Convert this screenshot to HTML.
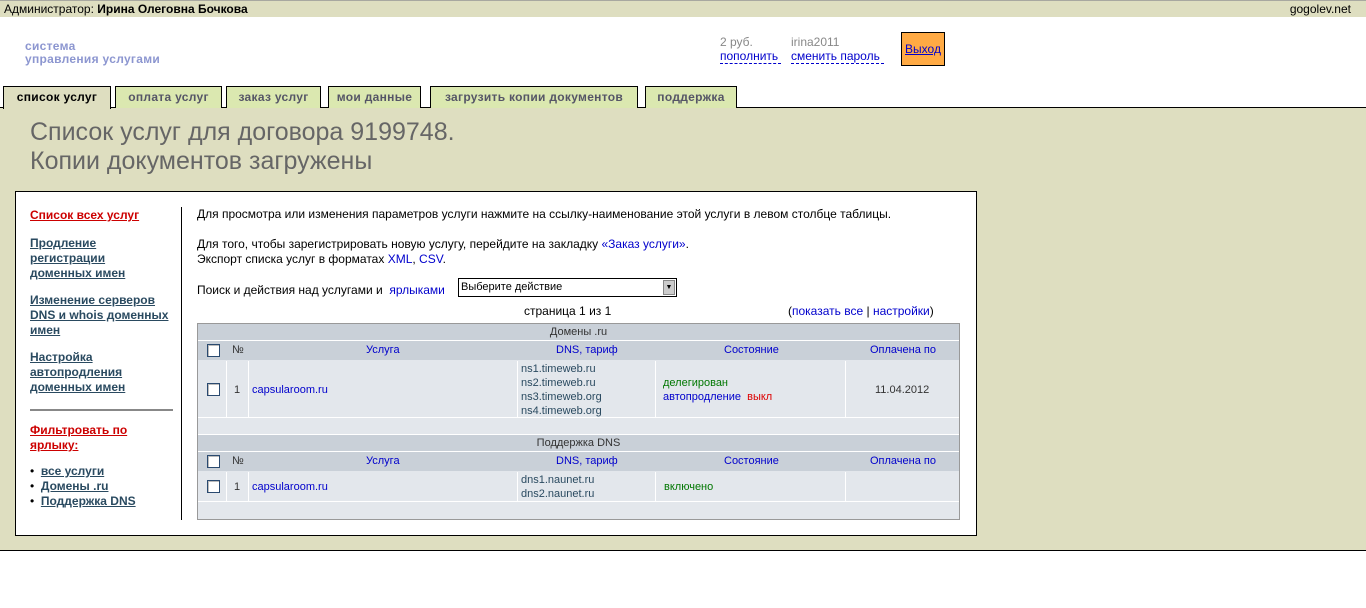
<!DOCTYPE html>
<html><head><meta charset="utf-8"><style>
*{margin:0;padding:0;box-sizing:border-box}
body{width:1366px;height:608px;background:#fff;font-family:"Liberation Sans",Arial,sans-serif;font-size:11px;color:#000;position:relative;overflow:hidden}
.a{position:absolute}
a{color:#00c}
.top{left:0;top:0;width:1366px;height:17px;background:#dedec0;border-top:1px solid #a8a8a0;font-size:12px;line-height:16px;padding-left:4px}
.logo{left:25px;top:40px;color:#8c96d0;font-weight:bold;font-size:12px;line-height:13px;letter-spacing:.3px}
.tab{top:86px;height:22px;background:#dbe8b0;border:1px solid #000;border-bottom:none;font-size:12px;font-weight:bold;color:#556;line-height:20px;text-align:center;letter-spacing:.3px}
.tab.on{background:#dedec0;color:#000;height:23px;top:86px}
.main{left:0;top:107px;width:1366px;height:444px;background:#dedec0;border-top:1px solid #000;border-bottom:1px solid #000}
h1{position:absolute;left:30px;top:118px;font-weight:normal;font-size:25px;color:#666;line-height:29px}
.box{left:15px;top:191px;width:962px;height:345px;background:#fff;border:1px solid #000}
.side a{color:#2a4a60;font-weight:bold;font-size:12px;line-height:15px;display:block;text-decoration:underline}
td{font-size:11px}
.chk{display:inline-block;width:13px;height:13px;border:1px solid #2a4a70;background:#fff;box-shadow:inset 1px 1px 0 #bbb}
.hd{color:#00c}
</style></head><body>
<div class="a top">Администратор: <b>Ирина Олеговна Бочкова</b><span style="position:absolute;right:15px">gogolev.net</span></div>
<div class="a logo">система<br>управления услугами</div>
<div class="a" style="left:720px;top:35px;color:#888;font-size:12px">2 руб.</div>
<div class="a" style="left:791px;top:35px;color:#888;font-size:12px">irina2011</div>
<div class="a" style="left:720px;top:50px;font-size:12px;color:#00c;border-bottom:1px dashed #00c;line-height:13px;width:61px">пополнить</div>
<div class="a" style="left:791px;top:50px;font-size:12px;color:#00c;border-bottom:1px dashed #00c;line-height:13px;width:93px">сменить пароль</div>
<div class="a" style="left:901px;top:32px;width:44px;height:34px;background:#fa4;border:1px solid #000;text-align:center;line-height:32px;font-size:12px"><a href="#">Выход</a></div>
<div class="a main"></div>
<div class="a tab on" style="left:3px;width:108px">список услуг</div>
<div class="a tab" style="left:115px;width:107px">оплата услуг</div>
<div class="a tab" style="left:226px;width:95px">заказ услуг</div>
<div class="a tab" style="left:328px;width:93px">мои данные</div>
<div class="a tab" style="left:430px;width:208px">загрузить копии документов</div>
<div class="a tab" style="left:645px;width:92px">поддержка</div>
<h1>Список услуг для договора 9199748.<br>Копии документов загружены</h1>
<div class="a box"></div>
<div class="a side" style="left:30px;top:208px;width:140px">
<a style="color:#c00">Список всех услуг</a>
<a style="margin-top:13px">Продление регистрации доменных имен</a>
<a style="margin-top:12px">Изменение серверов DNS и whois доменных имен</a>
<a style="margin-top:12px">Настройка автопродления доменных имен</a>
<div style="border-top:2px solid #888;margin:14px 0 12px;width:143px"></div>
<a style="color:#c00">Фильтровать по ярлыку:</a>
<div style="margin-top:11px;font-size:12px"><div>•&nbsp; <a style="display:inline">все услуги</a></div><div>•&nbsp; <a style="display:inline">Домены .ru</a></div><div>•&nbsp; <a style="display:inline">Поддержка DNS</a></div></div>
</div>
<div class="a" style="left:181px;top:207px;width:1px;height:313px;background:#000"></div>
<div class="a" style="left:197px;top:207px;font-size:12px;line-height:15px">Для просмотра или изменения параметров услуги нажмите на ссылку-наименование этой услуги в левом столбце таблицы.<br><br>Для того, чтобы зарегистрировать новую услугу, перейдите на закладку <a>«Заказ услуги»</a>.<br>Экспорт списка услуг в форматах <a>XML</a>, <a>CSV</a>.</div>
<div class="a" style="left:197px;top:283px;font-size:12px">Поиск и действия над услугами и &nbsp;<a>ярлыками</a></div>
<div class="a" style="left:458px;top:278px;width:219px;height:19px;border:1px solid #000;background:#fff;font-size:11px;line-height:17px;padding-left:2px">Выберите действие<span style="position:absolute;right:1px;top:1px;width:12px;height:15px;background:#ccc;border:1px solid #888;font-size:7px;text-align:center;line-height:13px">▼</span></div>
<div class="a" style="left:524px;top:304px;font-size:12px">страница 1 из 1</div>
<div class="a" style="left:788px;top:304px;font-size:12px">(<a>показать все</a> | <a>настройки</a>)</div>
<div class="a" style="left:197px;top:323px;width:763px;height:197px;background:#e3e7ec;border:1px solid #999"></div>
<div class="a" style="left:198px;top:324px;width:761px;height:16px;background:#c9d0d8;text-align:center;line-height:16px;color:#333">Домены .ru</div>
<div class="a" style="left:198px;top:340px;width:761px;height:20px;background:#c9d0d8;border-top:1px solid #fff"></div>
<div class="a" style="left:198px;top:417px;width:761px;height:1px;background:#fff"></div>
<div class="a" style="left:198px;top:434px;width:761px;height:1px;background:#fff"></div>
<div class="a" style="left:198px;top:435px;width:761px;height:16px;background:#c9d0d8;text-align:center;line-height:16px;color:#333">Поддержка DNS</div>
<div class="a" style="left:198px;top:451px;width:761px;height:20px;background:#c9d0d8;border-top:1px solid #fff"></div>
<div class="a" style="left:198px;top:501px;width:761px;height:1px;background:#fff"></div>
<div class="a" style="left:226px;top:361px;width:1px;height:56px;background:#fff"></div>
<div class="a" style="left:248px;top:361px;width:1px;height:56px;background:#fff"></div>
<div class="a" style="left:517px;top:361px;width:1px;height:56px;background:#fff"></div>
<div class="a" style="left:655px;top:361px;width:1px;height:56px;background:#fff"></div>
<div class="a" style="left:845px;top:361px;width:1px;height:56px;background:#fff"></div>
<div class="a" style="left:226px;top:472px;width:1px;height:29px;background:#fff"></div>
<div class="a" style="left:248px;top:472px;width:1px;height:29px;background:#fff"></div>
<div class="a" style="left:517px;top:472px;width:1px;height:29px;background:#fff"></div>
<div class="a" style="left:655px;top:472px;width:1px;height:29px;background:#fff"></div>
<div class="a" style="left:845px;top:472px;width:1px;height:29px;background:#fff"></div>
<span class="a chk" style="left:207px;top:344px"></span><span class="a" style="left:232px;top:344px;color:#333">№</span>
<span class="a hd" style="left:366px;top:344px">Услуга</span><span class="a hd" style="left:556px;top:344px">DNS, тариф</span><span class="a hd" style="left:724px;top:344px">Состояние</span><span class="a hd" style="left:870px;top:344px">Оплачена по</span>
<span class="a chk" style="left:207px;top:455px"></span><span class="a" style="left:232px;top:455px;color:#333">№</span>
<span class="a hd" style="left:366px;top:455px">Услуга</span><span class="a hd" style="left:556px;top:455px">DNS, тариф</span><span class="a hd" style="left:724px;top:455px">Состояние</span><span class="a hd" style="left:870px;top:455px">Оплачена по</span>
<span class="a chk" style="left:207px;top:383px"></span><span class="a" style="left:234px;top:384px;color:#333">1</span>
<span class="a" style="left:252px;top:384px;color:#00c">capsularoom.ru</span>
<div class="a" style="left:521px;top:362px;color:#2a4a60;line-height:14px">ns1.timeweb.ru<br>ns2.timeweb.ru<br>ns3.timeweb.org<br>ns4.timeweb.org</div>
<div class="a" style="left:663px;top:376px;line-height:14px"><span style="color:#070">делегирован</span><br><span style="color:#00c">автопродление</span> &nbsp;<span style="color:#d00">выкл</span></div>
<span class="a" style="left:875px;top:384px;color:#333">11.04.2012</span>
<span class="a chk" style="left:207px;top:480px"></span><span class="a" style="left:234px;top:481px;color:#333">1</span>
<span class="a" style="left:252px;top:481px;color:#00c">capsularoom.ru</span>
<div class="a" style="left:521px;top:473px;color:#2a4a60;line-height:14px">dns1.naunet.ru<br>dns2.naunet.ru</div>
<span class="a" style="left:664px;top:481px;color:#070">включено</span>
</body></html>
